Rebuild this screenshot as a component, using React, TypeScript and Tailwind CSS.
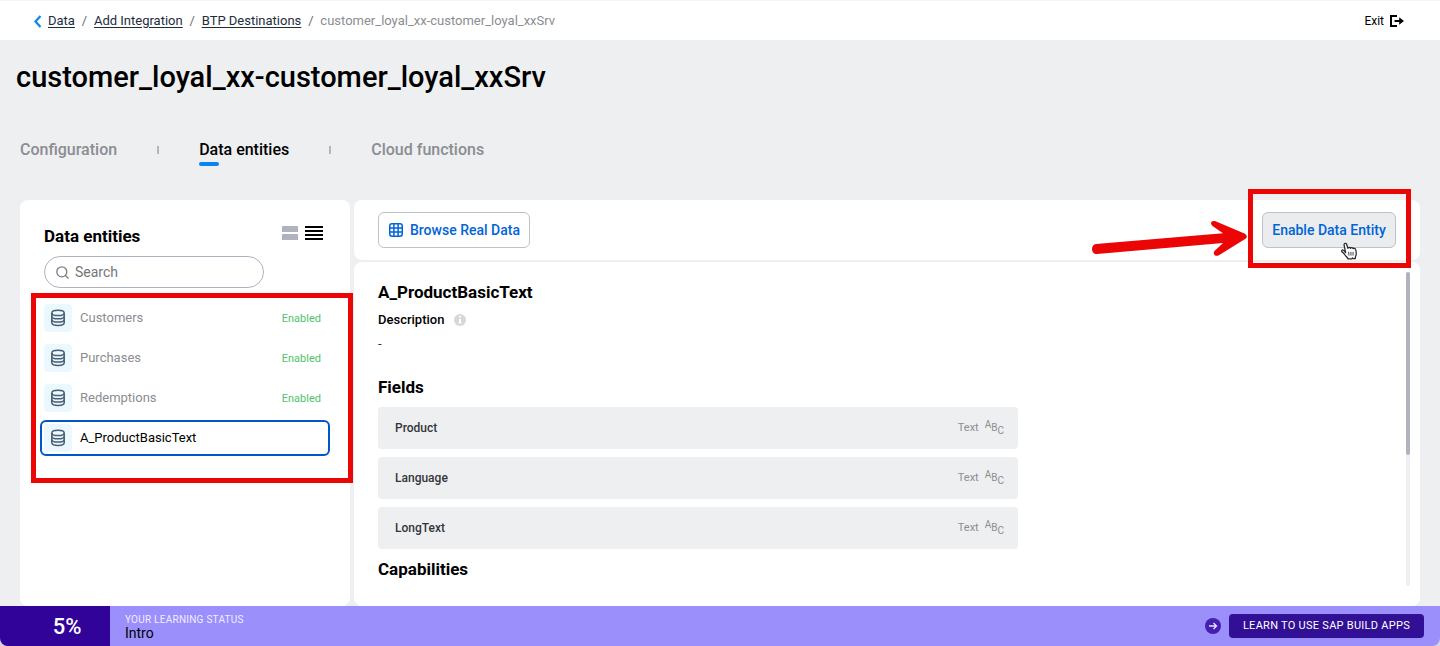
import React from "react";

const entities = [
  { name: "Customers", enabled: true },
  { name: "Purchases", enabled: true },
  { name: "Redemptions", enabled: true },
  { name: "A_ProductBasicText", enabled: false },
];

const fields = ["Product", "Language", "LongText"];

function DatabaseIcon() {
  return (
    <svg width="16" height="18" viewBox="0 0 16 18" fill="none" stroke="#475e75" strokeWidth="1.5" aria-hidden="true">
      <ellipse cx="8" cy="3.9" rx="6.2" ry="2.6" />
      <path d="M1.8 3.9v9.8c0 1.6 2.8 2.7 6.2 2.7s6.2-1.1 6.2-2.7V3.9" />
      <path d="M1.8 7.2c0 1.6 2.8 2.6 6.2 2.6s6.2-1 6.2-2.6" />
      <path d="M1.8 10.5c0 1.6 2.8 2.6 6.2 2.6s6.2-1 6.2-2.6" />
    </svg>
  );
}

function GridIcon() {
  return (
    <svg width="14" height="14" viewBox="0 0 14 14" fill="none" stroke="#0064d9" strokeWidth="1.5" aria-hidden="true">
      <rect x="0.75" y="0.75" width="12.5" height="12.5" rx="2.2" />
      <path d="M4.9 1v12M9.1 1v12M1 4.9h12M1 9.1h12" />
    </svg>
  );
}

function ExitIcon() {
  return (
    <svg width="14" height="12" viewBox="0 0 14 12" fill="none" aria-hidden="true">
      <path d="M7 1H1v10h6" stroke="#000" strokeWidth="2" />
      <path d="M4.500 6h6" stroke="#000" strokeWidth="2" />
      <path d="M9.200 2.200L14 6 9.200 9.800z" fill="#000" />
    </svg>
  );
}

function HandCursor() {
  return (
    <svg width="17" height="18" viewBox="0 0 17 18" aria-hidden="true">
      <path
        d="M4.6 10.6L3.1 2.9C2.9 1.2 5 .7 5.6 2.3l1.300 4c.2-1.300 2.200-1.300 2.600 0 .4-1 2.300-.9 2.600.4.6-.8 2.200-.5 2.500.7.5 1.600.9 3.600.5 5.400-.3 1.200-.8 1.700-.9 3.900h-2l-.6-.7-.8.9H7.100c-.9-1.700-2.300-2.600-3.500-4.400C2.800 11.300 1.700 10.500 1 9.700c-.9-1.100.3-2.200 1.500-1.500.8.500 1.400 1.300 2.100 2.400z"
        fill="#fff"
        stroke="#2b2b2b"
        strokeWidth="1.300"
        strokeLinejoin="round"
      />
      <path d="M7.700 9.800l.3 3.800M9.900 9.800l.1 3.800M12.100 9.800l-.1 3.800" stroke="#444" strokeWidth="1" />
    </svg>
  );
}

function Header() {
  const link = "text-[#1d2d3e] underline underline-offset-2";
  return (
    <header className="flex h-10 items-center justify-between border-t border-[#f3f4f5] bg-white pl-8 pr-9">
      <nav aria-label="Breadcrumb" className="flex items-center text-[13px] leading-5">
        <a href="#data" className="flex items-center gap-1 text-[#1d2d3e]">
          <svg width="12" height="14" viewBox="0 0 12 14" fill="none" aria-hidden="true">
            <path d="M8.500 2L3.500 7.500l5 5.500" stroke="#0a84f0" strokeWidth="2.200" />
          </svg>
          <span className="underline underline-offset-2">Data</span>
        </a>
        <span className="w-[19px] text-center text-[#6a6d70]">/</span>
        <a href="#add" className={link}>Add Integration</a>
        <span className="w-[19px] text-center text-[#6a6d70]">/</span>
        <a href="#btp" className={link}>BTP Destinations</a>
        <span className="w-[19px] text-center text-[#6a6d70]">/</span>
        <span className="text-[#8b8d92]">customer_loyal_xx-customer_loyal_xxSrv</span>
      </nav>
      <a href="#exit" className="flex items-center gap-1.5 text-xs text-black">
        Exit
        <ExitIcon />
      </a>
    </header>
  );
}

function Tabs() {
  return (
    <nav aria-label="Sections" className="flex items-center text-base font-medium text-[#8b8d92]">
      <a href="#configuration">Configuration</a>
      <span className="mx-10 h-2 w-0.5 bg-[#b2b5be]" />
      <a href="#entities" className="relative text-black">
        Data entities
        <span className="absolute -bottom-1 left-0 h-1 w-5 rounded-full bg-[#0a84f0]" />
      </a>
      <span className="mx-10 h-2 w-0.5 bg-[#b2b5be]" />
      <a href="#functions">Cloud functions</a>
    </nav>
  );
}

function EntityPanel() {
  return (
    <section className="flex w-[330px] shrink-0 flex-col rounded-lg bg-white px-5 pt-6">
      <div className="flex h-6 items-start justify-between px-1">
        <h2 className="text-[17px] font-bold leading-6">Data entities</h2>
        <div className="flex gap-1.5 pr-[3px] pt-0.5">
          <button aria-label="Card view" className="flex w-[18px] justify-center">
            <svg width="16" height="14" aria-hidden="true" fill="#b0b3bf">
              <rect width="16" height="6" rx="0.5" />
              <rect y="8" width="16" height="6" rx="0.5" />
            </svg>
          </button>
          <button aria-label="List view">
            <svg width="18" height="14" aria-hidden="true">
              <path d="M0 1h18M0 5h18M0 9h18M0 13h18" stroke="#000" strokeWidth="2" />
            </svg>
          </button>
        </div>
      </div>
      <div className="mx-1 mt-2 flex h-8 w-[220px] items-center gap-1.5 rounded-full border border-[#b0b3bf] pl-[11px]">
        <svg width="13" height="13" viewBox="0 0 13 13" fill="none" stroke="#7b7d82" strokeWidth="1.300" aria-hidden="true">
          <circle cx="5.800" cy="5.800" r="5" />
          <path d="M9.500 9.500l3 3" />
        </svg>
        <input
          type="text"
          aria-label="Search"
          placeholder="Search"
          className="w-40 bg-transparent text-sm outline-none placeholder:text-[#74777a]"
        />
      </div>
      <div className="relative mt-3">
        <ul className="flex flex-col gap-1">
          {entities.map((e) => (
            <li key={e.name}>
              <button
                className={
                  e.enabled
                    ? "flex h-9 w-full items-center rounded-md border-2 border-transparent pl-0.5 pr-[7px] text-[13px] text-[#8b8d92]"
                    : "flex h-9 w-full items-center rounded-md border-2 border-[#0057c7] pl-0.5 pr-[7px] text-[13px] text-black"
                }
              >
                <span className="mr-2 flex h-7 w-7 items-center justify-center rounded bg-[#ebf8ff]">
                  <DatabaseIcon />
                </span>
                {e.name}
                {e.enabled && <span className="ml-auto pt-0.5 text-[11px] text-[#4ec26c]">Enabled</span>}
              </button>
            </li>
          ))}
        </ul>
        <div className="pointer-events-none absolute -bottom-[27px] -left-[9px] -right-[23px] -top-[7px] border-5 border-[#eb0505]" />
      </div>
    </section>
  );
}

function Toolbar() {
  return (
    <div className="flex h-[60px] items-center justify-between rounded-lg bg-white px-6">
      <button className="flex h-9 items-center gap-1.5 rounded-md border border-[#bcc3ca] px-[9px] text-sm font-medium text-[#0064d9]">
        <span className="px-px"><GridIcon /></span>
        Browse Real Data
      </button>
      <div className="relative">
        <button className="h-9 min-w-[134px] rounded-md border border-[#bcc3ca] bg-[#eaecee] px-2 text-sm font-medium text-[#0064d9]">
          Enable Data Entity
        </button>
        <div className="absolute -bottom-3 right-[38px]">
          <HandCursor />
        </div>
        <div className="pointer-events-none absolute -bottom-5 -left-[14px] -right-[15px] -top-[23px] border-5 border-[#eb0505]" />
        <svg className="absolute right-full top-1.5 mr-[13px]" width="160" height="40" viewBox="0 0 160 40" aria-hidden="true">
          <path
            d="M7 26L134 15.300L123.500 8C120.500 5 122.500 2 126.500 3.300L156 15.800Q159.500 18.500 156.500 20.800L129.500 37.500C125.500 39 123.500 35.500 125.500 33L134 25L8 36C1.500 36 1.500 26.500 7 26z"
            fill="#eb0505"
          />
        </svg>
      </div>
    </div>
  );
}

function Details() {
  return (
    <section className="flex flex-1 gap-3 rounded-lg bg-white pl-6 pr-2.5">
      <div className="flex-1 pt-[18px]">
        <h2 className="text-[17px] font-bold leading-6">A_ProductBasicText</h2>
        <div className="mt-1.5 flex items-center gap-2.5 text-[13px] font-medium leading-5">
          <h3>Description</h3>
          <svg width="12" height="12" viewBox="0 0 12 12" aria-hidden="true">
            <circle cx="6" cy="6" r="6" fill="#d5d7db" />
            <path d="M5 2h2v1.500H5zM5 5h2v3.500h.500v1h-3v-1H5z" fill="#fff" />
          </svg>
        </div>
        <p className="mt-1 text-[13px] leading-5 text-[#32363a]">-</p>
        <h2 className="mt-[21px] text-[17px] font-bold leading-6">Fields</h2>
        <ul className="mt-2 flex w-[640px] max-w-full flex-col gap-2">
          {fields.map((f) => (
            <li key={f} className="flex h-[42px] items-center justify-between rounded bg-[#eeeff1] pl-[17px] pr-3.5">
              <span className="text-xs font-medium text-[#32363a]">{f}</span>
              <span className="flex items-center gap-1.5 text-[11px] text-[#8b8d92]">
                Text
                <span className="flex h-4 text-[10px] leading-[10px]">
                  <span className="self-start">A</span>
                  <span className="self-center">B</span>
                  <span className="self-end">C</span>
                </span>
              </span>
            </li>
          ))}
        </ul>
        <h2 className="mt-2 text-[17px] font-bold leading-6">Capabilities</h2>
      </div>
      <div className="mb-5 mt-2.5 w-1 rounded-full bg-[#eeeff1]">
        <div className="h-[183px] rounded-full bg-[#b0b3bf]" />
      </div>
    </section>
  );
}

function LearningBar() {
  return (
    <footer className="flex h-10 items-stretch overflow-hidden rounded-b-lg bg-[#9b8ffc]">
      <div className="flex w-[110px] items-center justify-center bg-[#310398] pl-6 text-[22px] font-medium text-white">5%</div>
      <div className="flex flex-col justify-center pl-[15px] pt-0.5">
        <span className="text-[10px] leading-3 tracking-wide text-[#f0edff]">YOUR LEARNING STATUS</span>
        <span className="text-sm leading-[14px] text-black">Intro</span>
      </div>
      <div className="ml-auto flex items-center gap-2 pr-4">
        <svg width="16" height="16" viewBox="0 0 16 16" fill="none" aria-hidden="true">
          <circle cx="8" cy="8" r="8" fill="#4420b0" />
          <path d="M4 8h7.500M8.500 5l3 3-3 3" stroke="#e6e0ff" strokeWidth="1.400" />
        </svg>
        <a href="#learn" className="flex h-6 items-center rounded-sm bg-[#311095] px-3.5 pt-px text-[11px] tracking-wide text-white">
          LEARN TO USE SAP BUILD APPS
        </a>
      </div>
    </footer>
  );
}

export default function App() {
  return (
    <div className="flex min-h-screen flex-col bg-[#d4d4de] font-[Roboto,sans-serif] text-black">
      <Header />
      <main className="flex flex-1 flex-col bg-[#eeeff1]">
        <h1 className="px-4 pt-[21px] text-[29px] font-medium leading-8">customer_loyal_xx-customer_loyal_xxSrv</h1>
        <div className="px-5 pt-[45px]">
          <Tabs />
        </div>
        <div className="flex flex-1 gap-1 px-5 pt-[38px]">
          <EntityPanel />
          <div className="flex min-w-0 flex-1 flex-col gap-0.5">
            <Toolbar />
            <Details />
          </div>
        </div>
      </main>
      <LearningBar />
    </div>
  );
}
